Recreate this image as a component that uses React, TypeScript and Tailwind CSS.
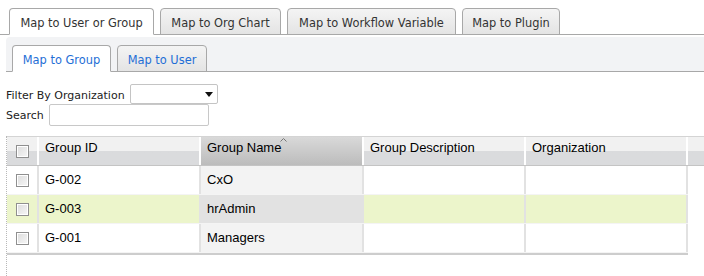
const topTabs = [
  { label: "Map to User or Group", w: "w-[145px]", active: true },
  { label: "Map to Org Chart", w: "w-[121px]" },
  { label: "Map to Workflow Variable", w: "w-[169px]" },
  { label: "Map to Plugin", w: "w-[98px]" },
];

const subTabs = [
  { label: "Map to Group", w: "w-[99px]", active: true },
  { label: "Map to User", w: "w-[90px]" },
];

const groups = [
  { id: "G-002", name: "CxO" },
  { id: "G-003", name: "hrAdmin", highlight: true },
  { id: "G-001", name: "Managers" },
];

function Checkbox() {
  return (
    <span className="block w-[13px] h-[13px] border border-[#8f8f8f] bg-gradient-to-br from-[#dcdcdc] to-[#f7f7f7] shadow-[inset_0_0_0_1px_#fff]" />
  );
}

export default function App() {
  return (
    <div className="w-[704px] h-[276px] overflow-hidden bg-white font-['DejaVu_Sans',sans-serif]">
      {/* top tabs */}
      <div className="flex items-end gap-[6px] pl-[9px] pt-[8px] border-b border-[#a8a8a8]">
        {topTabs.map((t) => (
          <div
            key={t.label}
            className={`${t.w} h-[27px] -mb-px flex items-center justify-center pt-[4px] border border-[#a8a8a8] rounded-t-[4px] text-[11.4px] text-[#333] ${
              t.active ? "bg-white border-b-white" : "bg-gradient-to-b from-[#f4f4f4] to-[#e4e4e4]"
            }`}
          >
            {t.label}
          </div>
        ))}
      </div>

      {/* sub tabs panel */}
      <div className="ml-[6px] mt-[2px] pt-[8px] bg-[#f2f3f5] rounded-tl-[4px] border-b border-[#a8a8a8]">
        <div className="flex items-end gap-[6px] pl-[6px]">
          {subTabs.map((t) => (
            <div
              key={t.label}
              className={`${t.w} h-[27px] -mb-px flex items-center justify-center pt-[4px] border border-[#a8a8a8] rounded-t-[4px] text-[11.4px] text-[#1f6fd6] ${
                t.active ? "bg-white border-b-white" : "bg-gradient-to-b from-[#f4f4f4] to-[#e4e4e4]"
              }`}
            >
              {t.label}
            </div>
          ))}
        </div>
      </div>

      {/* filters */}
      <div className="pl-[6px] pt-[12px] text-[11px] text-[#222]">
        <div className="flex items-center h-[20px]">
          <span className="pt-[4px]">Filter By Organization</span>
          <div className="ml-[5px] w-[88px] h-[20px] border border-[#c4c4c4] rounded-[2px] bg-white flex items-center justify-end pr-[4px]">
            <svg width="8" height="5" viewBox="0 0 8 5">
              <path d="M0 0h8L4 5z" fill="#111" />
            </svg>
          </div>
        </div>
        <div className="flex items-center h-[22px]">
          <span className="pt-[2px]">Search</span>
          <div className="ml-[5px] w-[160px] h-[22px] border border-[#c8c8c8] rounded-[2px] bg-white" />
        </div>
      </div>

      {/* table */}
      <div className="ml-[6px] mt-[10px] h-[200px] border-l border-dotted border-[#b8b8b8] font-['Liberation_Sans',Arial,sans-serif] text-[13px] text-black">
        <div className="flex h-[30px] leading-[16px] border-t border-[#d4d4d4] border-b border-b-[#c4c4c4] bg-gradient-to-b from-[#f1f1f1] from-50% to-[#dadbdd] to-50%">
          <div className="w-[32px] flex justify-center pt-[8px] border-r-2 border-white">
            <Checkbox />
          </div>
          <div className="w-[162px] pl-[6px] pt-[3px] border-r-2 border-white">Group ID</div>
          <div className="relative w-[163px] pl-[6px] pt-[3px] bg-gradient-to-b from-[#d9d9d9] to-[#bcbcbc] border-r-2 border-white">
            Group Name
            <svg className="absolute left-[79px] top-[1px]" width="7" height="4" viewBox="0 0 7 4">
              <path d="M0.5 3.5L3.5 0.5L6.5 3.5" fill="none" stroke="#777" strokeWidth="1" />
            </svg>
          </div>
          <div className="w-[162px] pl-[6px] pt-[3px] border-r-2 border-white">Group Description</div>
          <div className="w-[162px] pl-[6px] pt-[3px] border-r-2 border-white">Organization</div>
          <div className="flex-1" />
        </div>
        <div className="w-[681px] border-b-2 border-[#cdcdcd]">
          {groups.map((g) => (
            <div
              key={g.id}
              className={`flex h-[29px] items-center border-b border-[#f4f4f4] ${g.highlight ? "bg-[#ecf5cb]" : "bg-white"}`}
            >
              <div className="w-[32px] h-full flex items-center justify-center border-r-2 border-[#e2e2e2]">
                <Checkbox />
              </div>
              <div className="w-[162px] h-full flex items-center pl-[6px] border-r-2 border-[#e2e2e2]">{g.id}</div>
              <div
                className={`w-[163px] h-full flex items-center pl-[6px] border-r-2 border-[#e2e2e2] ${
                  g.highlight ? "bg-[#e2e2e2]" : "bg-[#f3f3f3]"
                }`}
              >
                {g.name}
              </div>
              <div className="w-[162px] h-full border-r-2 border-[#e2e2e2]" />
              <div className="w-[162px] h-full border-r-2 border-[#e2e2e2]" />
            </div>
          ))}
        </div>
      </div>
    </div>
  );
}
